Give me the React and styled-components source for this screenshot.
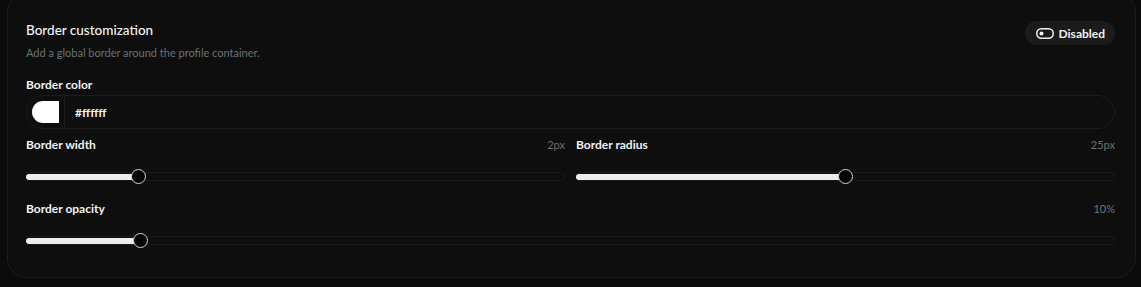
import React from "react";
import styled, { createGlobalStyle } from "styled-components";

const GlobalStyle = createGlobalStyle`
  html, body {
    margin: 0;
    background: #0b0b0b;
    overflow: hidden;
  }
  body {
    padding: 0 5px 0 7px;
    font-family: Lato, "Noto Sans", sans-serif;
    color: #f2f2f2;
  }
`;

const Card = styled.section`
  margin-top: -8px;
  background: #0e0e0e;
  border: 1px solid #1b1b1b;
  border-radius: 20px;
  padding: 27px 20px 29px 18px;
`;

const Header = styled.div`
  display: flex;
  justify-content: space-between;
  align-items: flex-start;
`;

const Title = styled.h2`
  margin: 0;
  font-size: 13.5px;
  line-height: 20px;
  font-weight: 500;
  color: #f5f5f5;
`;

const Subtitle = styled.p`
  margin: 6px 0 0;
  font-size: 11px;
  line-height: 14px;
  color: #6b7176;
`;

const ToggleButton = styled.button`
  display: flex;
  align-items: center;
  gap: 5px;
  height: 24px;
  margin-top: 1px;
  padding: 0 10px 0 11px;
  border: none;
  border-radius: 12px;
  background: #1b1b1b;
  color: #f2f2f2;
  font-family: inherit;
  font-size: 12px;
  font-weight: 700;
`;

const Label = styled.div`
  font-size: 12px;
  line-height: 16px;
  font-weight: 700;
  color: #f2f2f2;
`;

const ColorField = styled.div`
  margin-top: 17px;
`;

const ColorInput = styled.div`
  display: flex;
  align-items: center;
  height: 34px;
  margin-top: 2px;
  box-sizing: border-box;
  border: 1px solid #1b1b1b;
  border-radius: 17px;
`;

const Swatch = styled.div`
  width: 27px;
  height: 22px;
  margin-left: 5px;
  border-radius: 11px 0 0 11px;
  background: ${({ color }) => color};
`;

const Divider = styled.div`
  width: 1px;
  align-self: stretch;
  margin-left: 5px;
  background: #1b1b1b;
`;

const ColorText = styled.span`
  margin-left: 10px;
  font-size: 12px;
  font-weight: 700;
  color: #f2f2f2;
`;

const Row = styled.div`
  display: grid;
  grid-template-columns: 1fr 1fr;
  column-gap: 11px;
  margin-top: 8px;
`;

const Field = styled.div`
  margin-top: ${({ $top }) => $top || 0}px;
`;

const FieldHead = styled.div`
  display: flex;
  justify-content: space-between;
  align-items: center;
`;

const Value = styled.span`
  font-size: 11px;
  line-height: 16px;
  color: ${({ $tint }) => $tint || "#6f6f6f"};
`;

const SliderWrap = styled.div`
  position: relative;
  height: 15px;
  margin-top: 16px;
  display: flex;
  align-items: center;
`;

const Track = styled.div`
  position: relative;
  flex: 1;
  height: 9px;
  box-sizing: border-box;
  border: 1px solid #1b1b1b;
  border-radius: 5px;
`;

const Fill = styled.div`
  position: absolute;
  left: -1px;
  top: 1px;
  height: 6px;
  border-radius: 3px 0 0 3px;
  background: #ededed;
`;

const Thumb = styled.div`
  position: absolute;
  top: 0;
  width: 15px;
  height: 15px;
  box-sizing: border-box;
  border-radius: 50%;
  border: 1px solid #d4d4d4;
  background: #050505;
`;

const ToggleIcon = () => (
  <svg width="18" height="11" viewBox="0 0 18 11" fill="none">
    <rect x="0.75" y="0.75" width="16.5" height="9.5" rx="4.75" stroke="#f2f2f2" strokeWidth="1.5" />
    <circle cx="5.5" cy="5.5" r="2" fill="#f2f2f2" />
  </svg>
);

// thumb travels inside the track like a native range input
const Slider = ({ percent }) => {
  const p = percent / 100;
  const center = `calc(${p} * (100% - 15px) + 7.5px)`;
  return (
    <SliderWrap>
      <Track>
        <Fill style={{ width: center }} />
      </Track>
      <Thumb style={{ left: `calc(${center} - 7.5px)` }} />
    </SliderWrap>
  );
};

export default function App() {
  return (
    <>
      <GlobalStyle />
      <Card>
        <Header>
          <div>
            <Title>Border customization</Title>
            <Subtitle>Add a global border around the profile container.</Subtitle>
          </div>
          <ToggleButton>
            <ToggleIcon />
            Disabled
          </ToggleButton>
        </Header>

        <ColorField>
          <Label>Border color</Label>
          <ColorInput>
            <Swatch color="#ffffff" />
            <Divider />
            <ColorText>#ffffff</ColorText>
          </ColorInput>
        </ColorField>

        <Row>
          <Field>
            <FieldHead>
              <Label>Border width</Label>
              <Value>2px</Value>
            </FieldHead>
            <Slider percent={20} />
          </Field>
          <Field>
            <FieldHead>
              <Label>Border radius</Label>
              <Value>25px</Value>
            </FieldHead>
            <Slider percent={50} />
          </Field>
        </Row>

        <Field $top={17}>
          <FieldHead>
            <Label>Border opacity</Label>
            <Value $tint="#637983">10%</Value>
          </FieldHead>
          <Slider percent={10} />
        </Field>
      </Card>
    </>
  );
}
